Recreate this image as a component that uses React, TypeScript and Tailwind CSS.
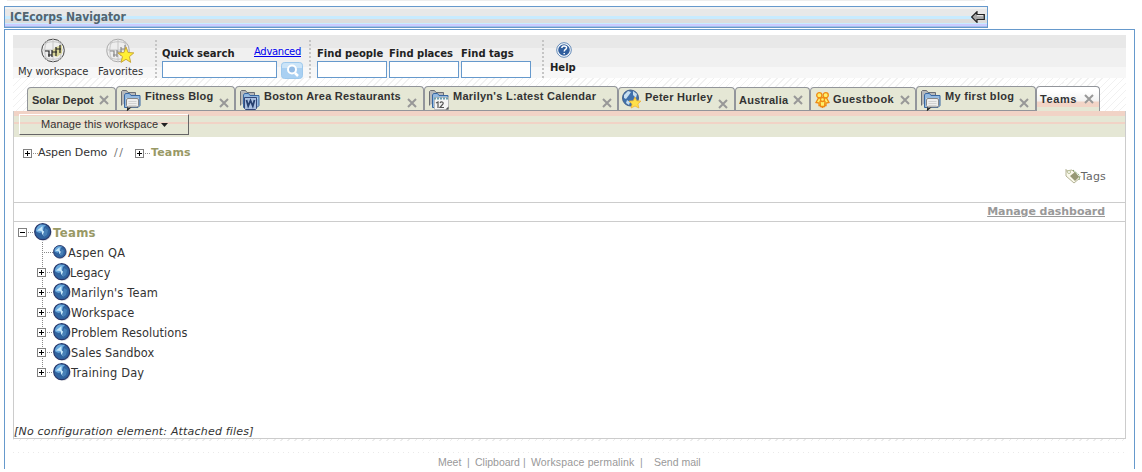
import type { ReactNode } from "react";

type IconName = "chat" | "word" | "calendar" | "globestar" | "people";
type TabData = {
  label: string;
  slot: string;
  text: string;
  icon?: IconName;
  active?: boolean;
};

const tabs: TabData[] = [
  { label: "Solar Depot", slot: "w-[89px] h-[24px]", text: "ml-1 w-[67px] mt-[3px]" },
  { label: "Fitness Blog", slot: "w-[119px] h-[25px]", text: "ml-[4px] w-[74px] tracking-[0.2px]", icon: "chat" },
  { label: "Boston Area Restaurants", slot: "w-[189px] h-[25px]", text: "ml-[4px] w-[143px] tracking-[0.23px]", icon: "word" },
  { label: "Marilyn's L:atest Calendar", slot: "w-[194px] h-[25px]", text: "ml-[4px] w-[149px] tracking-[0.26px]", icon: "calendar" },
  { label: "Peter Hurley", slot: "w-[117px] h-[24px]", text: "ml-[3px] w-[73px] tracking-[0.25px]", icon: "globestar" },
  { label: "Australia", slot: "w-[75px] h-[24px]", text: "ml-[3px] w-[54px] mt-[3px] tracking-[0.25px]" },
  { label: "Guestbook", slot: "w-[106px] h-[24px]", text: "ml-[3px] w-[67px] mt-[2px] tracking-[0.4px]", icon: "people" },
  { label: "My first blog", slot: "w-[120px] h-[25px]", text: "ml-[4px] w-[74px] tracking-[0.3px]", icon: "chat" },
  { label: "Teams", slot: "w-[64px] h-[25px]", text: "ml-[3px] w-[44px] mt-[3px] tracking-[0.6px]", active: true },
];

function TabIcon({ name }: { name: IconName }) {
  if (name === "people") {
    return (
      <svg className="ml-1 mt-1 h-4 w-[15px] shrink-0" viewBox="0 0 15 16">
        <g fill="#fff06a" stroke="#ee8b14" strokeWidth="1.300">
          <circle cx="4.300" cy="3.300" r="2.600" />
          <circle cx="10.700" cy="3.300" r="2.600" />
          <path d="M1 10.500 3.500 6h2l2 2 2-2h2L14 10.500l-3 .5v2.500H9l-1.500 2-1.500-2H4V11z" />
          <path d="M5.500 14.500 5 9.500l2.500-2 2.500 2-.5 5z" />
          <circle cx="7.500" cy="7.500" r="2" />
        </g>
      </svg>
    );
  }
  if (name === "globestar") {
    return (
      <svg className="ml-[3px] mt-px h-[20px] w-[20px] shrink-0" viewBox="0 0 20 20">
        <circle cx="8.500" cy="9" r="8" fill="#3f70ab" stroke="#49658c" />
        <path d="M2 6 6 2l3 1-2 3-3 4-2-1zM11 2l4 3-1 4-3-3zM5 11l3 2-1 3-3-2z" fill="#c7dff0" />
        <path d="m13 8 1.800 3.800 4.200.3-3.100 2.800 1 4.100-3.900-2-3.900 2 1-4.100L7 12.100l4.200-.3z" fill="#ffe04a" stroke="#f0ad2c" strokeWidth=".7" />
      </svg>
    );
  }
  return (
    <svg className="ml-1 mt-[2px] h-[22px] w-[20px] shrink-0" viewBox="0 0 20 22">
      <path d="M.5 16.500V2.500l1-1h4l1.500 2h7.500v3" fill="#b6b8ba" stroke="#6c6f74" />
      <path d="M3.500 18.500V6l1-1.500h4l1.500 2h9v10l-2 2z" fill="#94b9e0" stroke="#3867a1" />
      <path d="M5.500 18V9.500h12" fill="none" stroke="#d5eaff" />
      {name === "chat" && (
        <>
          <path d="m7 17.500-.5 3.500 4-3.500" fill="#ddd" stroke="#222" strokeWidth="1.200" />
          <path d="M5.500 11q0-1.500 1.500-1.500h9q1.500 0 1.500 1.500v5.500q0 1.500-1.500 1.500H7q-1.500 0-1.500-1.500z" fill="#eee" stroke="#858585" />
          <path d="M7.500 12.500h8M7.500 14.500h8M7.500 16.500h8" stroke="#d1d1d1" />
        </>
      )}
      {name === "word" && (
        <>
          <path d="M4.500 8.500h12v11l-1 1h-10l-1-1z" fill="#a9bfe0" stroke="#354879" />
          <path d="m6.500 11 1.700 6 2.300-5.500 2.300 5.500 1.700-6" fill="none" stroke="#26406f" strokeWidth="1.800" />
        </>
      )}
      {name === "calendar" && (
        <>
          <path d="M5.500 8.500h14v12h-14z" fill="#f5f5f5" stroke="#bbb" />
          <path d="M5 9.500h14" stroke="#6b9faf" strokeWidth="2" strokeDasharray="2 1" />
          <path d="m7 14 2-1v6M11 14c1-2 4-1 3 1l-3 3.500h4" fill="none" stroke="#555" strokeWidth="1.200" />
          <path d="M19.500 17.500v3h-3z" fill="#555" />
        </>
      )}
    </svg>
  );
}

function Close() {
  return (
    <svg className="h-[10px] w-[10px] shrink-0" viewBox="0 0 10 10">
      <path d="m1 1 8 8M9 1 1 9" stroke="#989898" strokeWidth="2" />
    </svg>
  );
}

function Tab({ tab }: { tab: TabData }) {
  const lowClose = tab.icon && tab.icon !== "people";
  return (
    <div
      className={`flex shrink-0 items-start rounded-t-[4px] border border-b-0 border-[#92959b] ${tab.slot} ${
        tab.active
          ? "bg-[linear-gradient(#fff_0_4px,#f2f2f2_14px,#f2d4c6_15px_20px,#e5e7d5_20px)]"
          : "bg-[#e5e7d5] shadow-[inset_0_-1px_0_#92959b]"
      }`}
    >
      {tab.icon && <TabIcon name={tab.icon} />}
      <span className={`shrink-0 whitespace-nowrap font-['Liberation_Sans',sans-serif] text-[11px] font-bold leading-[18px] text-[#333] ${tab.text}`}>
        {tab.label}
      </span>
      <span className={lowClose ? "mt-[11px]" : "mt-[7px]"}>
        <Close />
      </span>
    </div>
  );
}

function Expander({ minus = false }: { minus?: boolean }) {
  return (
    <svg className="h-[9px] w-[16px] shrink-0" viewBox="0 0 16 9" shapeRendering="crispEdges">
      <path d="M.5.5h8v8h-8z" fill="#fff" stroke="#808080" />
      <path d={minus ? "M2 4.500h5" : "M2 4.500h5M4.500 2v5"} stroke="#000" />
      <path d="M10 4.500h6" stroke="#909090" strokeDasharray="1 1" />
    </svg>
  );
}

function Globe({ size }: { size: string }) {
  return (
    <svg className={`shrink-0 ${size}`} viewBox="0 0 18 18">
      <circle cx="9.600" cy="9.700" r="8.200" fill="#dedee2" />
      <circle cx="8.700" cy="8.700" r="8" fill="#30639f" stroke="#26366a" strokeWidth="1.200" />
      <path d="M2 8C2 5 4 2 7 1.500L12 2l-2 2-1 4-3 2-3-1z" fill="#68a8dc" />
      <path d="M3 7.500 8.500 3v4l2 2-.5 4-2-2-.5-3z" fill="#c7e8fb" />
      <path d="m11 5 3 2-1 5-3 2-1-3 1-2z" fill="#4880b7" />
    </svg>
  );
}

function GridGlobe({ star = false }: { star?: boolean }) {
  return (
    <svg className="h-[25px] w-[28px]" viewBox="0 0 28 25">
      <circle cx="12" cy="12.500" r="11.300" fill="#eee" stroke={star ? "#aaa" : "#444"} />
      <path d="M3 6C8 3 16 3 21 6M1 12h22M3 19c5 3 13 3 18 0M12 1v23M6 3c-3 6-3 13 0 19M18 3c3 6 3 13 0 19" fill="none" stroke="#c6c6c6" />
      {!star && <path d="m11 13 4-4 6-2v8l-5 4-5-2z" fill="#d9d697" />}
      <path d="M4 13h4v6M7 17h4v-5M11 19v-5h5M15 18V9M15 11h5M19 7v8" fill="none" stroke={star ? "#888" : "#222"} strokeWidth="1.200" />
      {star && <path d="m20 9 2 5.500 5.800.4-4.400 3.800 1.300 5.700-4.700-3.100-5 3.100 1.500-5.800-4.600-3.600 6-.5z" fill="#fff034" stroke="#c9a63a" />}
    </svg>
  );
}

function Rule({ className }: { className: string }) {
  return (
    <div
      className={`h-[39px] w-[2px] shrink-0 bg-[repeating-linear-gradient(#c5c5c5_0_2px,transparent_2px_4px)] ${className}`}
    />
  );
}

function Find({ label }: { label: string }) {
  return (
    <div className="mt-[12px] w-[72px] shrink-0">
      <div className="h-[14px] whitespace-nowrap text-[10px] font-bold leading-[14px] text-[#222]">{label}</div>
      <input aria-label={label} className="block h-[17px] w-[70px] border border-[#6699cc] bg-white outline-none" />
    </div>
  );
}

const tree = [
  { name: "Aspen QA", text: "ml-px tracking-[0.2px]" },
  { name: "Legacy", text: "-ml-px" },
  { name: "Marilyn's Team", text: "tracking-[0.18px]" },
  { name: "Workspace", text: "tracking-[0.12px]" },
  { name: "Problem Resolutions", text: "tracking-[0.04px]" },
  { name: "Sales Sandbox", text: "" },
  { name: "Training Day", text: "tracking-[0.18px]" },
];

function FooterLink({ className, children }: { className: string; children: ReactNode }) {
  return <span className={`shrink-0 whitespace-nowrap ${className}`}>{children}</span>;
}

export default function App() {
  return (
    <main className="h-[472px] w-[1142px] overflow-hidden bg-white font-['DejaVu_Sans',sans-serif] text-[#333]">
      <div className="ml-[7px] h-px w-[978px] bg-[#eeeeee]" />
      <header className="ml-1 mt-[5px] flex h-[22px] w-[984px] items-center justify-between border border-[#6699cc] bg-[linear-gradient(#f2f2f2_0_2px,#e8e8e8_2px_9px,#c8ebff_9px_12px,#dcdcdc_12px_16px,#c8ebff_16px_17px,#ccccff_17px_19px,#a5bfe8_19px)] pl-[5px] pr-[2px]">
        <h1 className="text-[12px] font-bold leading-[20px] tracking-[-0.03px] text-[#526570] [font-stretch:condensed]">ICEcorps Navigator</h1>
        <svg className="h-[12px] w-[14px]" viewBox="0 0 14 12">
          <path d="M.7 6 6 .7V3.500h7.300v5H6v2.800z" fill="#a8a8a8" stroke="#222" strokeWidth="1.200" />
          <path d="M6 4.700h6" stroke="#eee" />
        </svg>
      </header>

      <section className="ml-1 mt-px h-[440px] w-[1131px] border border-b-0 border-[#6699cc] pl-2 pt-[5px]">
        <nav className="flex h-[43px] w-[1113px] bg-[linear-gradient(#e8e8e8_0_13px,#f0f0f0_13px_32px,#f7f7f7_32px)]">
          <div className="ml-[5px] flex w-[80px] shrink-0 flex-col text-[10px] leading-[12px]">
            <div className="ml-[23px] mt-[3px] h-[29px]"><GridGlobe /></div>
            <span className="whitespace-nowrap tracking-[-0.08px]">My workspace</span>
          </div>
          <div className="flex w-[57px] shrink-0 flex-col text-[10px] leading-[12px]">
            <div className="ml-2 mt-[3px] h-[29px]"><GridGlobe star /></div>
            <span>Favorites</span>
          </div>
          <Rule className="mt-[5px]" />
          <div className="ml-[5px] mt-[12px] w-[147px] shrink-0">
            <div className="flex h-[14px] w-[139px] items-start justify-between whitespace-nowrap text-[10px] leading-[14px]">
              <b className="text-[#222]">Quick search</b>
              <a className="-mt-[2px] tracking-[-0.3px] text-[#0000ee] underline">Advanced</a>
            </div>
            <div className="flex">
              <input aria-label="Quick search" className="h-[17px] w-[115px] border border-[#6699cc] bg-white outline-none" />
              <svg className="ml-1 mt-px h-[17px] w-[22px]" viewBox="0 0 22 17">
                <rect x=".5" y=".5" width="21" height="16" rx="3" fill="#a9d0f2" stroke="#9dc8ec" />
                <path d="M1 4q0-3 3-3h14q3 0 3 3v2H1z" fill="#cbe4f8" />
                <circle cx="11" cy="7.500" r="4" fill="#94bce5" stroke="#fff" strokeWidth="2" />
                <path d="m14 11 3 3" stroke="#fff" strokeWidth="2.500" />
              </svg>
            </div>
          </div>
          <Rule className="mt-[5px]" />
          <div className="ml-[6px] flex w-[225px] shrink-0">
            <Find label="Find people" />
            <Find label="Find places" />
            <Find label="Find tags" />
          </div>
          <Rule className="mt-[5px]" />
          <div className="ml-[6px] mt-[7px] flex w-[27px] flex-col text-[10px] font-bold leading-[12px] text-[#222]">
            <svg className="ml-[6px] h-[17px] w-[17px]" viewBox="0 0 17 17">
              <circle cx="8" cy="8" r="7.300" fill="#fff" stroke="#6088b7" />
              <circle cx="8" cy="8" r="5.800" fill="#315f9e" />
              <path d="M5.800 6Q6 3.700 8.400 4q3.200.5 1.700 2.800Q8.200 8 8.200 9.400M8.200 11v1.300" fill="none" stroke="#fff" strokeWidth="1.500" />
            </svg>
            <span className="mt-[3px]">Help</span>
          </div>
        </nav>

        <div className="flex h-[33px] w-[1113px] items-end bg-[repeating-linear-gradient(135deg,#f1f1f1_0_1px,transparent_1px_5px)] pl-[14px]">
          {tabs.map((tab) => <Tab key={tab.label} tab={tab} />)}
        </div>

        <div className="h-[328px] w-[1113px] border border-t-0 border-[#cccccc] bg-white">
          <div className="h-[26px] bg-[linear-gradient(#f1d3c6_0_5px,#e5e7d5_5px_11px,#f1d3c6_11px_13px,#e5e7d5_13px)] pl-[5px] pt-[3px]">
            <button className="flex h-[21px] w-[170px] items-center border border-b-[#666] border-l-white border-r-[#666] border-t-white pl-[21px] font-['Liberation_Sans',sans-serif] text-[11px] tracking-[0.08px]">
              Manage this workspace
              <svg className="ml-[3px] h-[4px] w-[7px]" viewBox="0 0 7 4"><path d="M0 0h7L3.500 4z" fill="#222" /></svg>
            </button>
          </div>
          <div className="flex h-[32px] items-center pl-[9px] text-[11px]">
            <Expander />
            <span className="-ml-px w-[77px] whitespace-nowrap pt-px tracking-[-0.1px]">Aspen Demo</span>
            <span className="-ml-px w-[21px] pt-px tracking-[1.500px] text-[#777]">//</span>
            <Expander />
            <b className="pt-px tracking-[0.15px] text-[#999966]">Teams</b>
          </div>
          <div className="flex h-[33px] items-start justify-end pr-[19px] text-[11px] leading-[15px] text-[#666]">
            <svg className="-mt-px h-[16px] w-[16px]" viewBox="0 0 16 16">
              <path d="M1 1v7l8 7 6-5-8-8-6 1" fill="#faf9ec" stroke="#b4b395" />
              <path d="m5 8 5-4 4 5-4 4z" fill="#969874" />
              <circle cx="4" cy="4" r="1.500" fill="#fff" stroke="#b8c096" />
              <path d="M8 2 15 8 14 12" fill="none" stroke="#80a46c" strokeDasharray="2 1" />
            </svg>
            <span className="tracking-[0.2px]">Tags</span>
          </div>
          <div className="flex h-[20px] items-center justify-end border-y border-[#cccccc] pr-[20px] text-[11px] font-bold tracking-[-0.05px] text-[#999] underline">Manage dashboard</div>
          <div className="flex h-[20px] items-center pl-[4px]">
            <Expander minus />
            <Globe size="h-[18px] w-[18px]" />
            <b className="ml-px pt-[3px] text-[11.700px] tracking-[0.3px] text-[#999966]">Teams</b>
          </div>
          <div className="ml-[28px] h-[141px] bg-[repeating-linear-gradient(#888_0_1px,transparent_1px_2px)] bg-[length:1px_131px] bg-no-repeat">
            {tree.map(({ name, text }, index) => (
              <div key={name} className="-ml-[5px] flex h-[20px] items-center">
                {index === 0 ? (
                  <svg className="ml-[5px] h-px w-[11px]" viewBox="0 0 11 1"><path d="M2 .5h9" stroke="#888" strokeDasharray="1 1" /></svg>
                ) : (
                  <Expander />
                )}
                <Globe size={index === 0 ? "h-[14px] w-[14px]" : "h-[18px] w-[18px]"} />
                <span className={`whitespace-nowrap pt-[3px] text-[11.400px] ${text}`}>{name}</span>
              </div>
            ))}
          </div>
          <div className="mt-[41px] whitespace-nowrap text-[11px] italic leading-[15px] tracking-[0.19px]">[No configuration element: Attached files]</div>
        </div>

        <div className="h-[2px] w-[1113px] bg-[repeating-linear-gradient(135deg,#ececec_0_1px,transparent_1px_5px)]" />
        <div className="mt-[11px] h-px w-[1113px] bg-[repeating-linear-gradient(90deg,#eaeaea_0_1px,transparent_1px_5px)]" />
        <footer className="mt-[3px] flex pl-[425px] font-['Liberation_Sans',sans-serif] text-[10.500px] leading-[12px] text-[#999]">
          <FooterLink className="w-[29px]">Meet</FooterLink>
          <FooterLink className="w-[8px]">|</FooterLink>
          <FooterLink className="w-[48px]">Clipboard</FooterLink>
          <FooterLink className="w-[8px]">|</FooterLink>
          <FooterLink className="w-[109px] tracking-[0.14px]">Workspace permalink</FooterLink>
          <FooterLink className="w-[14px]">|</FooterLink>
          <FooterLink className="w-[60px]">Send mail</FooterLink>
        </footer>
      </section>
    </main>
  );
}
